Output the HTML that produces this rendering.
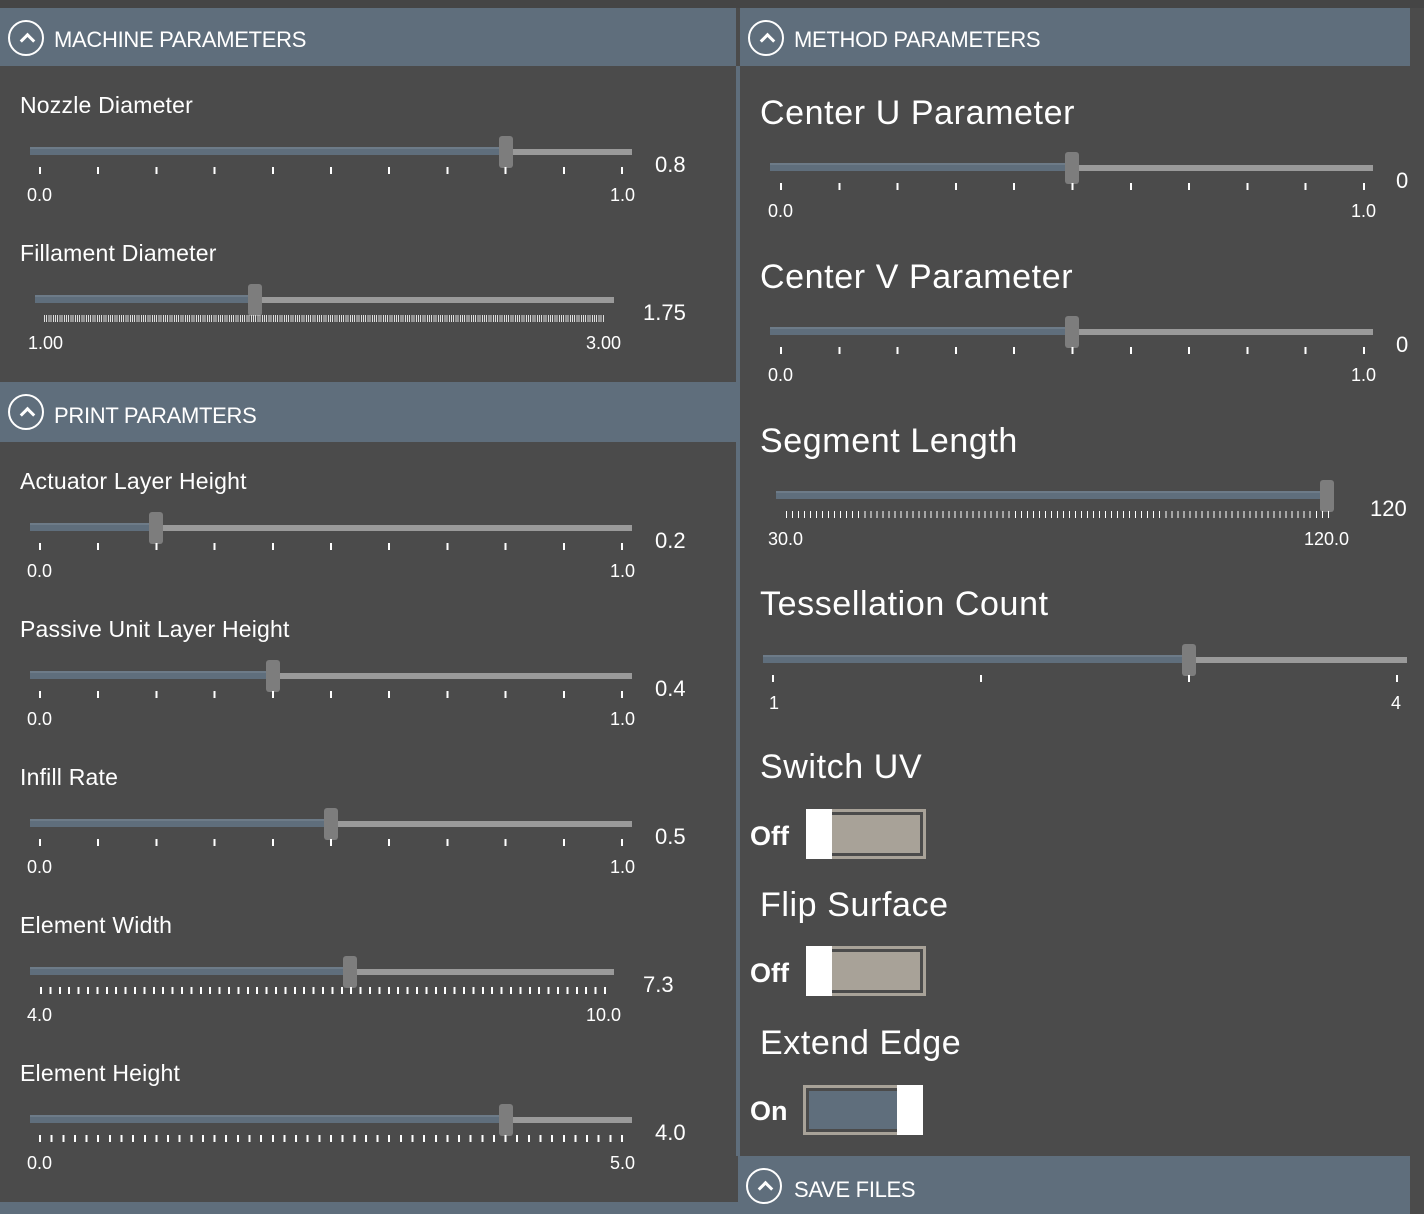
<!DOCTYPE html>
<html><head><meta charset="utf-8"><style>
*{margin:0;padding:0;box-sizing:border-box}
body{width:1424px;height:1214px;background:#4b4b4b;position:relative;overflow:hidden;font-family:"Liberation Sans",sans-serif;color:#fff}
.a{position:absolute}
.hdr{position:absolute;background:#5f6e7c;height:58px}
.hdr .ic{position:absolute;left:8px;top:12px;width:36px;height:36px;border:2px solid #fff;border-radius:50%}
.hdr .ic:after{content:"";position:absolute;left:12px;top:13px;width:8px;height:8px;border-left:3px solid #fff;border-top:3px solid #fff;transform:rotate(45deg)}
.hdr .t{position:absolute;left:54px;top:19px;font-size:22px;letter-spacing:-0.3px;white-space:nowrap}
.lbl{position:absolute;font-size:23px;letter-spacing:0.2px;white-space:nowrap}
.big{position:absolute;font-size:34px;letter-spacing:0.6px;white-space:nowrap}
.fill{position:absolute;height:8px;background:#5f6e7c;border-top:2px solid #6d7b88}
.rest{position:absolute;height:6px;background:#9a9a9a}
.th{position:absolute;width:14px;height:32px;background:#7d7d7d;border-radius:3px}
.tk{position:absolute;height:7px}
.sm{position:absolute;font-size:18px;white-space:nowrap}
.val{position:absolute;font-size:22px;white-space:nowrap}
.tg{position:absolute;width:120px;height:50px;border:3px solid #a8a298;background:#4b4b4b}
.tg .in{position:absolute;left:3px;top:3px;right:3px;bottom:3px;background:#a8a298}
.tg .w{position:absolute;top:-3px;bottom:-3px;width:26px;background:#fff}
.ot{position:absolute;font-size:27px;font-weight:bold;letter-spacing:0px}
</style></head><body>
<div class="a" style="left:0;top:0;width:1424px;height:8px;background:#454545"></div>
<div class="a" style="left:736px;top:66px;width:4px;height:1090px;background:#5f6e7c"></div>

<div class="hdr" style="left:0;top:8px;width:736px"><div class="ic"></div><div class="t">MACHINE PARAMETERS</div></div>
<div class="hdr" style="left:740px;top:8px;width:670px"><div class="ic"></div><div class="t">METHOD PARAMETERS</div></div>
<div class="hdr" style="left:0;top:382px;width:736px;height:60px"><div class="ic"></div><div class="t" style="top:21px">PRINT PARAMTERS</div></div>
<div class="hdr" style="left:738px;top:1156px;width:672px"><div class="ic"></div><div class="t" style="left:56px;top:21px">SAVE FILES</div></div>
<div class="a" style="left:0;top:1202px;width:738px;height:12px;background:#5f6e7c"></div>

<!-- Nozzle -->
<div class="lbl" style="left:20px;top:92px">Nozzle Diameter</div>
<div class="fill" style="left:30px;top:147px;width:470px"></div>
<div class="rest" style="left:512px;top:149px;width:120px"></div>
<div class="th" style="left:499px;top:136px"></div>
<div class="tk" style="left:39px;top:167px;width:585px;background:repeating-linear-gradient(to right,#fff 0 2px,transparent 2px 58.2px)"></div>
<div class="sm" style="left:27px;top:185px">0.0</div><div class="sm" style="left:610px;top:185px">1.0</div>
<div class="val" style="left:655px;top:152px">0.8</div>

<!-- Fillament -->
<div class="lbl" style="left:20px;top:240px">Fillament Diameter</div>
<div class="fill" style="left:35px;top:295px;width:214px"></div>
<div class="rest" style="left:261px;top:297px;width:353px"></div>
<div class="th" style="left:248px;top:284px"></div>
<div class="tk" style="left:44px;top:315px;width:561px;background:repeating-linear-gradient(to right,#ddd 0 1px,transparent 1px 2.2px)"></div>
<div class="sm" style="left:28px;top:333px">1.00</div><div class="sm" style="left:586px;top:333px">3.00</div>
<div class="val" style="left:643px;top:300px">1.75</div>

<!-- Actuator -->
<div class="lbl" style="left:20px;top:468px">Actuator Layer Height</div>
<div class="fill" style="left:30px;top:523px;width:120px"></div>
<div class="rest" style="left:162px;top:525px;width:470px"></div>
<div class="th" style="left:149px;top:512px"></div>
<div class="tk" style="left:39px;top:543px;width:585px;background:repeating-linear-gradient(to right,#fff 0 2px,transparent 2px 58.2px)"></div>
<div class="sm" style="left:27px;top:561px">0.0</div><div class="sm" style="left:610px;top:561px">1.0</div>
<div class="val" style="left:655px;top:528px">0.2</div>

<!-- Passive -->
<div class="lbl" style="left:20px;top:616px">Passive Unit Layer Height</div>
<div class="fill" style="left:30px;top:671px;width:237px"></div>
<div class="rest" style="left:279px;top:673px;width:353px"></div>
<div class="th" style="left:266px;top:660px"></div>
<div class="tk" style="left:39px;top:691px;width:585px;background:repeating-linear-gradient(to right,#fff 0 2px,transparent 2px 58.2px)"></div>
<div class="sm" style="left:27px;top:709px">0.0</div><div class="sm" style="left:610px;top:709px">1.0</div>
<div class="val" style="left:655px;top:676px">0.4</div>

<!-- Infill -->
<div class="lbl" style="left:20px;top:764px">Infill Rate</div>
<div class="fill" style="left:30px;top:819px;width:295px"></div>
<div class="rest" style="left:337px;top:821px;width:295px"></div>
<div class="th" style="left:324px;top:808px"></div>
<div class="tk" style="left:39px;top:839px;width:585px;background:repeating-linear-gradient(to right,#fff 0 2px,transparent 2px 58.2px)"></div>
<div class="sm" style="left:27px;top:857px">0.0</div><div class="sm" style="left:610px;top:857px">1.0</div>
<div class="val" style="left:655px;top:824px">0.5</div>

<!-- Element width -->
<div class="lbl" style="left:20px;top:912px">Element Width</div>
<div class="fill" style="left:30px;top:967px;width:314px"></div>
<div class="rest" style="left:356px;top:969px;width:258px"></div>
<div class="th" style="left:343px;top:956px"></div>
<div class="tk" style="left:40px;top:987px;width:566px;background:repeating-linear-gradient(to right,#fff 0 2px,transparent 2px 9.4px)"></div>
<div class="sm" style="left:27px;top:1005px">4.0</div><div class="sm" style="left:586px;top:1005px">10.0</div>
<div class="val" style="left:643px;top:972px">7.3</div>

<!-- Element height -->
<div class="lbl" style="left:20px;top:1060px">Element Height</div>
<div class="fill" style="left:30px;top:1115px;width:470px"></div>
<div class="rest" style="left:512px;top:1117px;width:120px"></div>
<div class="th" style="left:499px;top:1104px"></div>
<div class="tk" style="left:39px;top:1135px;width:585px;background:repeating-linear-gradient(to right,#fff 0 2px,transparent 2px 11.64px)"></div>
<div class="sm" style="left:27px;top:1153px">0.0</div><div class="sm" style="left:610px;top:1153px">5.0</div>
<div class="val" style="left:655px;top:1120px">4.0</div>

<!-- Center U -->
<div class="big" style="left:760px;top:94px">Center U Parameter</div>
<div class="fill" style="left:770px;top:163px;width:296px"></div>
<div class="rest" style="left:1078px;top:165px;width:295px"></div>
<div class="th" style="left:1065px;top:152px"></div>
<div class="tk" style="left:780px;top:183px;width:586px;background:repeating-linear-gradient(to right,#fff 0 2px,transparent 2px 58.3px)"></div>
<div class="sm" style="left:768px;top:201px">0.0</div><div class="sm" style="left:1351px;top:201px">1.0</div>
<div class="val" style="left:1396px;top:168px">0</div>

<!-- Center V -->
<div class="big" style="left:760px;top:258px">Center V Parameter</div>
<div class="fill" style="left:770px;top:327px;width:296px"></div>
<div class="rest" style="left:1078px;top:329px;width:295px"></div>
<div class="th" style="left:1065px;top:316px"></div>
<div class="tk" style="left:780px;top:347px;width:586px;background:repeating-linear-gradient(to right,#fff 0 2px,transparent 2px 58.3px)"></div>
<div class="sm" style="left:768px;top:365px">0.0</div><div class="sm" style="left:1351px;top:365px">1.0</div>
<div class="val" style="left:1396px;top:332px">0</div>

<!-- Segment -->
<div class="big" style="left:760px;top:422px">Segment Length</div>
<div class="fill" style="left:776px;top:491px;width:545px"></div>
<div class="th" style="left:1320px;top:480px"></div>
<div class="tk" style="left:786px;top:511px;width:544px;background:repeating-linear-gradient(to right,#fff 0 1px,transparent 1px 6.02px)"></div>
<div class="sm" style="left:768px;top:529px">30.0</div><div class="sm" style="left:1304px;top:529px">120.0</div>
<div class="val" style="left:1370px;top:496px">120</div>

<!-- Tessellation -->
<div class="big" style="left:760px;top:585px">Tessellation Count</div>
<div class="fill" style="left:763px;top:655px;width:420px"></div>
<div class="rest" style="left:1196px;top:657px;width:211px"></div>
<div class="th" style="left:1182px;top:644px"></div>
<div class="tk" style="left:772px;top:675px;width:627px;background:repeating-linear-gradient(to right,#fff 0 2px,transparent 2px 208px)"></div>
<div class="sm" style="left:769px;top:693px">1</div><div class="sm" style="left:1391px;top:693px">4</div>

<!-- Toggles -->
<div class="big" style="left:760px;top:748px">Switch UV</div>
<div class="ot" style="left:750px;top:821px">Off</div>
<div class="tg" style="left:806px;top:809px"><div class="in"></div><div class="w" style="left:-3px"></div></div>

<div class="big" style="left:760px;top:886px">Flip Surface</div>
<div class="ot" style="left:750px;top:958px">Off</div>
<div class="tg" style="left:806px;top:946px"><div class="in"></div><div class="w" style="left:-3px"></div></div>

<div class="big" style="left:760px;top:1024px">Extend Edge</div>
<div class="ot" style="left:750px;top:1096px">On</div>
<div class="tg" style="left:803px;top:1085px"><div class="in" style="background:#5f6e7c"></div><div class="w" style="right:-3px"></div></div>
</body></html>
